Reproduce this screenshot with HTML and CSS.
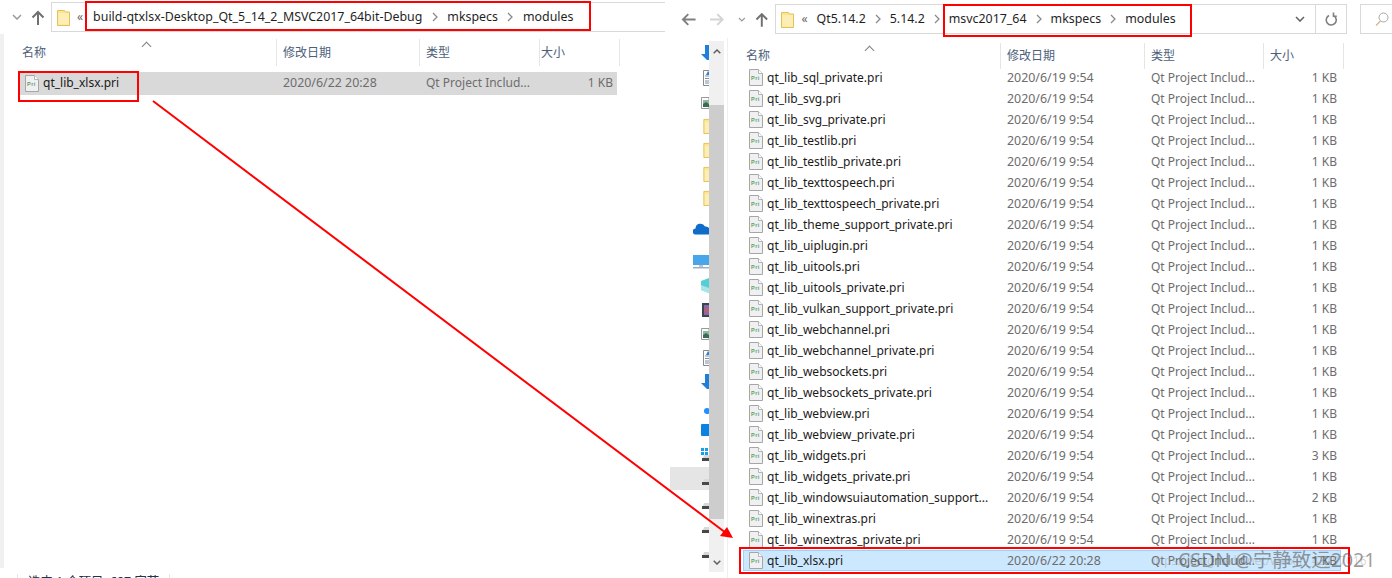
FILE: index.html
```html
<!DOCTYPE html>
<html lang="zh-CN">
<head>
<meta charset="utf-8">
<title>模块文件复制</title>
<link rel="stylesheet" href="styles.css">
</head>
<body>
<svg class="defs" width="0" height="0" aria-hidden="true">
  <defs>
    <symbol id="pri" viewBox="0 0 14 17">
      <path d="M.5.500h9l4 4v12H.5z" fill="#f0f0f2" stroke="#a6a6a6"/>
      <path d="M9.500.500v4h4" fill="#fff" stroke="#b5b5b5"/>
      <text x="2" y="10.500" font-size="5.500" font-weight="700" font-family="Liberation Sans, sans-serif" letter-spacing=".5" fill="#5f9f66">Pri</text>
    </symbol>
    <symbol id="folder" viewBox="0 0 13 17">
      <path d="M.5 1.500h7l1 1.500h4v13.500H.5z" fill="#fde48f" stroke="#e3c25a"/>
      <path d="M1.500 4h10.500v11.500H1.500z" fill="#fdeeb5"/>
    </symbol>
    <symbol id="chev" viewBox="0 0 6 10">
      <path d="M1 1l4 4-4 4" fill="none" stroke="#8a8a8a" stroke-width="1.300"/>
    </symbol>
    <symbol id="drive" viewBox="0 0 8 6">
      <path d="M2 0h6v3H1z" fill="#d9d9d9"/>
      <path d="M0 3h8v3H0z" fill="#484848"/>
    </symbol>
    <symbol id="doc" viewBox="0 0 8 16">
      <path d="M.5.500h7.500v15H.5z" fill="#fff" stroke="#8a8a8a"/>
      <path d="M2 6h6M2 8.500h6M2 11h6M2 13h6" stroke="#7c8ea3"/>
      <path d="M5 1l3 4H3z" fill="#2d7fd0"/>
    </symbol>
    <symbol id="photo" viewBox="0 0 8 12">
      <path d="M.5.500h7.500v11H.5z" fill="#fff" stroke="#999"/>
      <path d="M2 3h6v7H2z" fill="#8fb6a0"/>
      <path d="M2 7l3-2 3 2v3H2z" fill="#3d6a57"/>
    </symbol>
    <symbol id="bluearrow" viewBox="0 0 8 15">
      <path d="M4 0h4v15H6L0 9h4z" fill="#1f7fd8"/>
    </symbol>
  </defs>
</svg>

<main class="desktop">
  <!-- Build output folder -->
  <section class="win win-left">
    <div class="toolbar toolbar-left">
      <svg class="tb-drop" width="10" height="6" viewBox="0 0 10 6"><path d="M1 1l4 4 4-4" fill="none" stroke="#9a9a9a" stroke-width="1.500"/></svg>
      <svg class="tb-up" width="14" height="15" viewBox="0 0 14 15"><path d="M7 15V2M1.500 7.500L7 2l5.500 5.500" fill="none" stroke="#707070" stroke-width="2"/></svg>
      <div class="address address-left">
        <svg class="addr-folder" width="13" height="17"><use href="#folder"/></svg>
        <span class="addr-more">«</span>
        <span class="crumb">build-qtxlsx-Desktop_Qt_5_14_2_MSVC2017_64bit-Debug</span>
        <svg class="sep" width="6" height="10"><use href="#chev"/></svg>
        <span class="crumb">mkspecs</span>
        <svg class="sep" width="6" height="10"><use href="#chev"/></svg>
        <span class="crumb">modules</span>
      </div>
    </div>
    <div class="files files-left">
      <div class="edge-bar"></div>
      <div class="list list-left">
        <div class="head">
          <span class="c-name">名称<i class="sort"></i></span><span class="c-date">修改日期</span><span class="c-type">类型</span><span class="c-size">大小</span>
        </div>
        <div class="row row-picked">
          <span class="c-name"><svg class="pri" width="14" height="17"><use href="#pri"/></svg>qt_lib_xlsx.pri</span><span class="c-date">2020/6/22 20:28</span><span class="c-type">Qt Project Includ...</span><span class="c-size">1 KB</span>
        </div>
      </div>
    </div>
    <div class="status"><span class="status-text">选中 1 个项目&nbsp; 687 字节</span></div>
  </section>

  <!-- Qt kit folder -->
  <section class="win win-right">
    <div class="toolbar toolbar-right">
      <svg class="tb-back" width="15" height="13" viewBox="0 0 15 13"><path d="M15 6.500H2M7.500 1L2 6.500 7.500 12" fill="none" stroke="#808080" stroke-width="2"/></svg>
      <svg class="tb-fwd" width="15" height="13" viewBox="0 0 15 13"><path d="M0 6.500h13M7.500 1L13 6.500 7.500 12" fill="none" stroke="#d4d4d4" stroke-width="2"/></svg>
      <svg class="tb-drop2" width="8" height="5" viewBox="0 0 8 5"><path d="M1 1l3 3 3-3" fill="none" stroke="#9a9a9a" stroke-width="1.300"/></svg>
      <svg class="tb-up2" width="14" height="15" viewBox="0 0 14 15"><path d="M7 15V2M1.500 7.500L7 2l5.500 5.500" fill="none" stroke="#707070" stroke-width="2"/></svg>
      <div class="address address-right">
        <svg class="addr-folder" width="13" height="17"><use href="#folder"/></svg>
        <span class="addr-more">«</span>
        <span class="crumb">Qt5.14.2</span>
        <svg class="sep" width="6" height="10"><use href="#chev"/></svg>
        <span class="crumb">5.14.2</span>
        <svg class="sep" width="6" height="10"><use href="#chev"/></svg>
        <span class="crumb">msvc2017_64</span>
        <svg class="sep" width="6" height="10"><use href="#chev"/></svg>
        <span class="crumb">mkspecs</span>
        <svg class="sep" width="6" height="10"><use href="#chev"/></svg>
        <span class="crumb">modules</span>
        <span class="addr-tools">
          <svg class="addr-drop" width="10" height="6" viewBox="0 0 10 6"><path d="M1 1l4 4 4-4" fill="none" stroke="#666" stroke-width="1.600"/></svg>
          <span class="addr-refresh"><svg width="12" height="14" viewBox="0 0 12 14"><path d="M4 3.500a5 5 0 1 0 5 .3M8.500 .5v3.800h3.300" fill="none" stroke="#808080" stroke-width="1.600"/></svg></span>
        </span>
      </div>
      <div class="search"><svg width="14" height="14" viewBox="0 0 14 14"><circle cx="8.500" cy="5.500" r="4.500" fill="none" stroke="#a8a8a8"/><path d="M5.500 9L1 13.500" stroke="#d8b48a" stroke-width="1.200"/></svg></div>
    </div>
    <div class="files">
      <nav class="nav">
        <svg class="n n1" width="8" height="15"><use href="#bluearrow"/></svg>
        <svg class="n n2" width="8" height="16"><use href="#doc"/></svg>
        <svg class="n n3" width="8" height="12"><use href="#photo"/></svg>
        <svg class="n n4" width="13" height="16"><use href="#folder"/></svg>
        <svg class="n n5" width="13" height="16"><use href="#folder"/></svg>
        <svg class="n n6" width="13" height="16"><use href="#folder"/></svg>
        <svg class="n n7" width="13" height="16"><use href="#folder"/></svg>
        <svg class="n n8" width="16" height="12" viewBox="0 0 16 12"><path d="M3 11.500a3 3 0 0 1-.5-6A5 5 0 0 1 12 3.500 4 4 0 0 1 16 5v6.500z" fill="#0f6cc9"/></svg>
        <svg class="n n9" width="16" height="16" viewBox="0 0 16 16"><path d="M0 1h16v10H0z" fill="#49a6e8"/><path d="M0 13h16v1.500H0z" fill="#9ab0c2"/><path d="M6 11h4v2H6z" fill="#b7c6d2"/></svg>
        <svg class="n n10" width="8" height="15" viewBox="0 0 8 15"><path d="M0 3l8-3v15l-8-3z" fill="#55cfd6"/><path d="M0 7l8 3v5l-8-3z" fill="#a6e6e6"/></svg>
        <svg class="n n11" width="7" height="14" viewBox="0 0 7 14"><path d="M0 0h7v14H0z" fill="#3a4552"/><path d="M2 2h5v10H2z" fill="#8a6aa5"/><path d="M2 7l5-2v4H2z" fill="#c05d70"/></svg>
        <svg class="n n12" width="8" height="12"><use href="#photo"/></svg>
        <svg class="n n13" width="8" height="16"><use href="#doc"/></svg>
        <svg class="n n14" width="8" height="15"><use href="#bluearrow"/></svg>
        <svg class="n n15" width="6" height="6" viewBox="0 0 6 6"><circle cx="4" cy="3" r="3" fill="#1e90ff"/></svg>
        <svg class="n n16" width="8" height="12" viewBox="0 0 8 12"><path d="M1 0h7v12H1a1 1 0 0 1-1-1V1a1 1 0 0 1 1-1z" fill="#0a84e0"/></svg>
        <svg class="n n17" width="8" height="7" viewBox="0 0 8 7"><path d="M0 0h3v3H0zM4 0h3v3H4zM0 4h3v3H0zM4 4h3v3H4z" fill="#14a0ea"/></svg>
        <span class="nav-current"></span>
        <svg class="n n18" width="8" height="6"><use href="#drive"/></svg>
        <svg class="n n19" width="8" height="6"><use href="#drive"/></svg>
        <svg class="n n20" width="8" height="6"><use href="#drive"/></svg>
        <svg class="n n21" width="8" height="6"><use href="#drive"/></svg>
        <svg class="n n22" width="8" height="6"><use href="#drive"/></svg>
      </nav>
      <div class="scroll">
        <span class="sb-btn sb-top"><svg width="8" height="5" viewBox="0 0 8 5"><path d="M.7 4.300L4 1l3.300 3.300" fill="none" stroke="#606060" stroke-width="1.500"/></svg></span>
        <span class="sb-thumb"></span>
        <span class="sb-btn sb-bottom"><svg width="8" height="5" viewBox="0 0 8 5"><path d="M.7.700L4 4l3.300-3.300" fill="none" stroke="#606060" stroke-width="1.500"/></svg></span>
      </div>
      <div class="list list-right">
        <div class="head">
          <span class="c-name">名称<i class="sort"></i></span><span class="c-date">修改日期</span><span class="c-type">类型</span><span class="c-size">大小</span>
        </div>
        <div class="row"><span class="c-name"><svg class="pri" width="14" height="17"><use href="#pri"/></svg>qt_lib_sql_private.pri</span><span class="c-date">2020/6/19 9:54</span><span class="c-type">Qt Project Includ...</span><span class="c-size">1 KB</span></div>
        <div class="row"><span class="c-name"><svg class="pri" width="14" height="17"><use href="#pri"/></svg>qt_lib_svg.pri</span><span class="c-date">2020/6/19 9:54</span><span class="c-type">Qt Project Includ...</span><span class="c-size">1 KB</span></div>
        <div class="row"><span class="c-name"><svg class="pri" width="14" height="17"><use href="#pri"/></svg>qt_lib_svg_private.pri</span><span class="c-date">2020/6/19 9:54</span><span class="c-type">Qt Project Includ...</span><span class="c-size">1 KB</span></div>
        <div class="row"><span class="c-name"><svg class="pri" width="14" height="17"><use href="#pri"/></svg>qt_lib_testlib.pri</span><span class="c-date">2020/6/19 9:54</span><span class="c-type">Qt Project Includ...</span><span class="c-size">1 KB</span></div>
        <div class="row"><span class="c-name"><svg class="pri" width="14" height="17"><use href="#pri"/></svg>qt_lib_testlib_private.pri</span><span class="c-date">2020/6/19 9:54</span><span class="c-type">Qt Project Includ...</span><span class="c-size">1 KB</span></div>
        <div class="row"><span class="c-name"><svg class="pri" width="14" height="17"><use href="#pri"/></svg>qt_lib_texttospeech.pri</span><span class="c-date">2020/6/19 9:54</span><span class="c-type">Qt Project Includ...</span><span class="c-size">1 KB</span></div>
        <div class="row"><span class="c-name"><svg class="pri" width="14" height="17"><use href="#pri"/></svg>qt_lib_texttospeech_private.pri</span><span class="c-date">2020/6/19 9:54</span><span class="c-type">Qt Project Includ...</span><span class="c-size">1 KB</span></div>
        <div class="row"><span class="c-name"><svg class="pri" width="14" height="17"><use href="#pri"/></svg>qt_lib_theme_support_private.pri</span><span class="c-date">2020/6/19 9:54</span><span class="c-type">Qt Project Includ...</span><span class="c-size">1 KB</span></div>
        <div class="row"><span class="c-name"><svg class="pri" width="14" height="17"><use href="#pri"/></svg>qt_lib_uiplugin.pri</span><span class="c-date">2020/6/19 9:54</span><span class="c-type">Qt Project Includ...</span><span class="c-size">1 KB</span></div>
        <div class="row"><span class="c-name"><svg class="pri" width="14" height="17"><use href="#pri"/></svg>qt_lib_uitools.pri</span><span class="c-date">2020/6/19 9:54</span><span class="c-type">Qt Project Includ...</span><span class="c-size">1 KB</span></div>
        <div class="row"><span class="c-name"><svg class="pri" width="14" height="17"><use href="#pri"/></svg>qt_lib_uitools_private.pri</span><span class="c-date">2020/6/19 9:54</span><span class="c-type">Qt Project Includ...</span><span class="c-size">1 KB</span></div>
        <div class="row"><span class="c-name"><svg class="pri" width="14" height="17"><use href="#pri"/></svg>qt_lib_vulkan_support_private.pri</span><span class="c-date">2020/6/19 9:54</span><span class="c-type">Qt Project Includ...</span><span class="c-size">1 KB</span></div>
        <div class="row"><span class="c-name"><svg class="pri" width="14" height="17"><use href="#pri"/></svg>qt_lib_webchannel.pri</span><span class="c-date">2020/6/19 9:54</span><span class="c-type">Qt Project Includ...</span><span class="c-size">1 KB</span></div>
        <div class="row"><span class="c-name"><svg class="pri" width="14" height="17"><use href="#pri"/></svg>qt_lib_webchannel_private.pri</span><span class="c-date">2020/6/19 9:54</span><span class="c-type">Qt Project Includ...</span><span class="c-size">1 KB</span></div>
        <div class="row"><span class="c-name"><svg class="pri" width="14" height="17"><use href="#pri"/></svg>qt_lib_websockets.pri</span><span class="c-date">2020/6/19 9:54</span><span class="c-type">Qt Project Includ...</span><span class="c-size">1 KB</span></div>
        <div class="row"><span class="c-name"><svg class="pri" width="14" height="17"><use href="#pri"/></svg>qt_lib_websockets_private.pri</span><span class="c-date">2020/6/19 9:54</span><span class="c-type">Qt Project Includ...</span><span class="c-size">1 KB</span></div>
        <div class="row"><span class="c-name"><svg class="pri" width="14" height="17"><use href="#pri"/></svg>qt_lib_webview.pri</span><span class="c-date">2020/6/19 9:54</span><span class="c-type">Qt Project Includ...</span><span class="c-size">1 KB</span></div>
        <div class="row"><span class="c-name"><svg class="pri" width="14" height="17"><use href="#pri"/></svg>qt_lib_webview_private.pri</span><span class="c-date">2020/6/19 9:54</span><span class="c-type">Qt Project Includ...</span><span class="c-size">1 KB</span></div>
        <div class="row"><span class="c-name"><svg class="pri" width="14" height="17"><use href="#pri"/></svg>qt_lib_widgets.pri</span><span class="c-date">2020/6/19 9:54</span><span class="c-type">Qt Project Includ...</span><span class="c-size">3 KB</span></div>
        <div class="row"><span class="c-name"><svg class="pri" width="14" height="17"><use href="#pri"/></svg>qt_lib_widgets_private.pri</span><span class="c-date">2020/6/19 9:54</span><span class="c-type">Qt Project Includ...</span><span class="c-size">1 KB</span></div>
        <div class="row"><span class="c-name"><svg class="pri" width="14" height="17"><use href="#pri"/></svg>qt_lib_windowsuiautomation_support...</span><span class="c-date">2020/6/19 9:54</span><span class="c-type">Qt Project Includ...</span><span class="c-size">2 KB</span></div>
        <div class="row"><span class="c-name"><svg class="pri" width="14" height="17"><use href="#pri"/></svg>qt_lib_winextras.pri</span><span class="c-date">2020/6/19 9:54</span><span class="c-type">Qt Project Includ...</span><span class="c-size">1 KB</span></div>
        <div class="row"><span class="c-name"><svg class="pri" width="14" height="17"><use href="#pri"/></svg>qt_lib_winextras_private.pri</span><span class="c-date">2020/6/19 9:54</span><span class="c-type">Qt Project Includ...</span><span class="c-size">1 KB</span></div>
        <div class="row row-new"><span class="c-name"><svg class="pri" width="14" height="17"><use href="#pri"/></svg>qt_lib_xlsx.pri</span><span class="c-date">2020/6/22 20:28</span><span class="c-type">Qt Project Includ...</span><span class="c-size">1 KB</span></div>
      </div>
    </div>
  </section>
</main>

<!-- Red callouts drawn on top of both windows -->
<svg class="marks" width="1392" height="578" viewBox="0 0 1392 578" aria-hidden="true">
  <g fill="none" stroke="#f00" stroke-width="2">
    <rect x="86" y="2" width="504" height="28"/>
    <rect x="19" y="72" width="119" height="29"/>
    <rect x="944" y="5" width="247" height="31"/>
    <rect x="740" y="548" width="609" height="25"/>
    <path d="M153 101L726 533"/>
  </g>
  <path d="M733 538l-13-2 7-9z" fill="#f00"/>
</svg>

<div class="credit"><span class="credit-url">https://blog.csdn.net/weixin_43197016</span><span class="credit-name">CSDN @宁静致远2021</span></div>
</body>
</html>
```
FILE: styles.css
```css
* { box-sizing: border-box; }

html, body {
  margin: 0;
  height: 578px;
  overflow: hidden;
  background: #fff;
}

body {
  position: relative;
  font: 12px/16px "Noto Sans", "Noto Sans CJK SC", sans-serif;
  color: #1a1a1a;
}

.defs { position: absolute; }

.desktop {
  display: flex;
  justify-content: space-between;
  width: 1392px;
  height: 578px;
}

.win {
  display: flex;
  flex-direction: column;
  height: 578px;
  overflow: hidden;
}
.win-left { width: 668px; }
.win-right { width: 724px; }

/* Toolbar and address bar */
.toolbar {
  display: flex;
  align-items: center;
  flex: none;
}
.toolbar-left { height: 34px; padding: 1px 3px 1px 12px; }
.toolbar-right { height: 38px; padding: 0 0 0 13px; }

.tb-up { margin-left: 9px; margin-right: 6px; }
.tb-fwd { margin-left: 14px; }
.tb-drop2 { margin-left: 14px; }
.tb-up2 { margin-left: 9px; margin-right: 7px; }

.address {
  display: flex;
  align-items: center;
  flex: none;
  border: 1px solid #d9d9d9;
  color: #1f1f1f;
  font-size: 12.400px;
}
.address-left {
  flex: 1;
  height: 30px;
  padding-left: 5px;
  border-right: 0;
}
.address-right {
  width: 572px;
  height: 30px;
  padding-left: 5px;
}

.addr-folder { flex: none; margin-right: 7px; }
.addr-more { color: #666; margin-right: 9px; font-size: 12px; }
.address-left .addr-more { margin-right: 10px; }
.sep { flex: none; margin: 0 9px; }
.address-left .sep { margin: 0 9.500px; }

.addr-tools {
  display: flex;
  align-items: center;
  align-self: stretch;
  margin-left: auto;
}
.addr-drop { margin-right: 10px; }
.addr-refresh {
  display: flex;
  align-items: center;
  justify-content: center;
  width: 31px;
  align-self: stretch;
  border-left: 1px solid #d9d9d9;
}

.search {
  display: flex;
  align-items: center;
  width: 32px;
  height: 30px;
  margin-left: 13px;
  padding-left: 14px;
  border: 1px solid #d9d9d9;
  border-right: 0;
}

/* File area */
.files {
  position: relative;
  display: flex;
  flex: 1;
  min-height: 0;
}
.files-left { height: 534px; flex: none; }
.edge-bar {
  flex: none;
  width: 4px;
  background: #f0f0f0;
}

/* Status bar, only the tops of its glyphs fit in the window */
.status {
  display: flex;
  align-items: flex-start;
  flex: none;
  height: 10px;
  padding: 6px 0 0 17px;
  color: #1f3350;
}
.status-text {
  padding: 0 10px;
  border-left: 1px solid #e5e5e5;
  border-right: 1px solid #e5e5e5;
  font-size: 12.400px;
  line-height: 16px;
  white-space: nowrap;
}

/* Navigation pane, icons are cut off by the scrollbar */
.nav {
  position: relative;
  flex: none;
  width: 41px;
  overflow: hidden;
}
.n { position: absolute; left: 33px; }
.n1 { top: 7px; }
.n2 { top: 32px; left: 35px; }
.n3 { top: 59px; }
.n4 { top: 80px; left: 35px; }
.n5 { top: 104px; left: 35px; }
.n6 { top: 128px; left: 35px; }
.n7 { top: 152px; left: 35px; }
.n8 { top: 185px; left: 25px; }
.n9 { top: 216px; left: 25px; }
.n10 { top: 240px; }
.n11 { top: 265px; left: 34px; }
.n12 { top: 290px; }
.n13 { top: 312px; left: 35px; }
.n14 { top: 336px; }
.n15 { top: 370px; left: 35px; }
.n16 { top: 386px; }
.n17 { top: 410px; }
.n18 { top: 417px; left: 34px; }
.n19 { top: 441px; left: 34px; }
.n20 { top: 465px; left: 34px; }
.n21 { top: 489px; left: 34px; }
.n22 { top: 514px; left: 34px; }

.nav-current {
  position: absolute;
  left: 2px;
  right: 0;
  top: 429px;
  height: 23px;
  background: #e5e5e5;
}

.scroll {
  display: flex;
  flex-direction: column;
  flex: none;
  width: 15px;
  height: 531px;
  margin-top: 3px;
  background: #f0f0f0;
}
.sb-btn {
  display: flex;
  justify-content: center;
  flex: none;
}
.sb-top { height: 64px; padding-top: 8px; }
.sb-bottom { height: 53px; padding-top: 41px; }
.sb-thumb { flex: 1; background: #cdcdcd; }

/* Detail list */
.list { flex: none; }
.list-left { width: 621px; padding-left: 14px; margin-top: 5px; }
.list-right {
  width: 621px;
  margin-left: 3px;
  padding-left: 12px;
  border-left: 1px solid #f0f0f0;
}

.head,
.row {
  display: flex;
  align-items: center;
  white-space: nowrap;
}
.head { align-items: flex-start; }
.head span {
  display: flex;
  align-items: center;
  border-right: 1px solid #e5e5e5;
  color: #4c607a;
}

.list-left .head { height: 29px; margin-bottom: 4px; }
.list-left .head span { height: 27px; }
.list-right .head { height: 29px; padding-top: 5px; }
.list-right .head span { height: 26px; }
.row { height: 21px; }

.head > span,
.row > span { flex: none; }

.c-name { position: relative; display: flex; align-items: center; }
.c-date, .c-type, .c-size { color: #6d6d6d; }
.row .c-date { font-size: 12.400px; }
.row .c-size { text-align: right; }

.list-left .c-name { width: 259px; padding-left: 4px; }
.list-left .c-date { width: 143px; padding-left: 6px; }
.list-left .c-type { width: 120px; padding-left: 6px; }
.list-left .c-size { width: 80px; padding-right: 7px; }
.list-left .head .c-size { padding-left: 1px; }

.list-right .c-name { width: 261px; padding-left: 6px; }
.list-right .c-date { width: 144px; padding-left: 6px; }
.list-right .c-type { width: 119px; padding-left: 6px; }
.list-right .c-size { width: 80px; padding-right: 7px; }
.list-right .head .c-size { padding-left: 6px; }

.list-left .row .c-name { padding-left: 7px; }
.list-right .row .c-name { padding-left: 9px; }

.pri { flex: none; margin-right: 4px; }

.sort {
  position: absolute;
  top: 3px;
  width: 9px;
  height: 5px;
}
.list-left .sort { left: 124px; }
.list-right .sort { left: 125px; }
.sort::before {
  content: "";
  position: absolute;
  left: 1px;
  top: 1px;
  width: 6px;
  height: 6px;
  border-left: 1px solid #808080;
  border-top: 1px solid #808080;
  transform: rotate(45deg);
}

.row-picked { width: 599px; height: 23px; padding-bottom: 1px; background: #d9d9d9; }
.row-new {
  width: 598px;
  margin-left: 3px;
  background: #cce8ff;
  border: 1px solid #99d1ff;
}
.row-new .c-name { margin-left: -4px; }

/* Callouts and the credit line sit above the windows */
.marks {
  position: absolute;
  left: 0;
  top: 0;
  pointer-events: none;
}

.credit {
  position: absolute;
  right: 0;
  top: 547px;
  width: 240px;
  height: 28px;
  white-space: nowrap;
  overflow: hidden;
}
.credit-url {
  position: absolute;
  left: -4px;
  top: 6px;
  font-size: 12px;
  color: rgba(150, 150, 150, .4);
}
.credit-name {
  position: absolute;
  left: 26px;
  top: 2px;
  font-size: 19.500px;
  line-height: 22px;
  color: rgba(90, 90, 90, .6);
}
```
